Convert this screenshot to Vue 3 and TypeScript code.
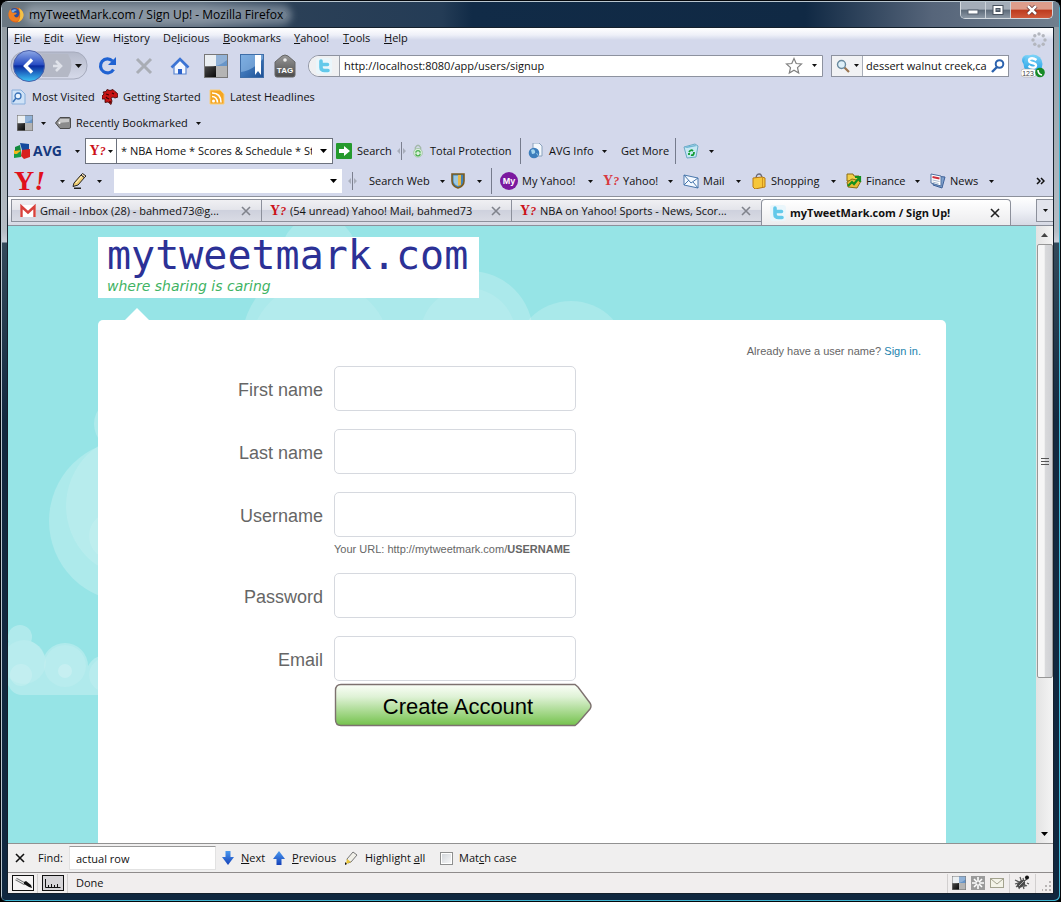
<script setup lang="ts">
import { ref } from 'vue'

interface Field { id: string; label: string; type: string; hint?: boolean }
interface Tab { title: string; icon: string; active?: boolean }
interface YahooLink { label: string; icon: string }

const menus = [
  ['', 'F', 'ile'], ['', 'E', 'dit'], ['', 'V', 'iew'], ['Hi', 's', 'tory'], ['De', 'l', 'icious'],
  ['', 'B', 'ookmarks'], ['', 'Y', 'ahoo!'], ['', 'T', 'ools'], ['', 'H', 'elp'],
]
const tabs: Tab[] = [
  { title: 'Gmail - Inbox (28) - bahmed73@g...', icon: 'gmail' },
  { title: '(54 unread) Yahoo! Mail, bahmed73', icon: 'yq' },
  { title: 'NBA on Yahoo! Sports - News, Scor...', icon: 'yq' },
  { title: 'myTweetMark.com / Sign Up!', icon: 'tw', active: true },
]
const links: YahooLink[] = [
  { label: 'My Yahoo!', icon: 'my' },
  { label: 'Yahoo!', icon: 'yq' },
  { label: 'Mail', icon: 'mail' },
  { label: 'Shopping', icon: 'shop' },
  { label: 'Finance', icon: 'fin' },
  { label: 'News', icon: 'news' },
]
const fields: Field[] = [
  { id: 'first', label: 'First name', type: 'text' },
  { id: 'last', label: 'Last name', type: 'text' },
  { id: 'user', label: 'Username', type: 'text', hint: true },
  { id: 'pass', label: 'Password', type: 'password' },
  { id: 'email', label: 'Email', type: 'email' },
]
const address = ref('http://localhost:8080/app/users/signup')
const query = ref('dessert walnut creek,ca')
const avgQuery = ref('* NBA Home * Scores & Schedule * Stats')
const find = ref('actual row')
</script>

<template>
  <svg class="defs" aria-hidden="true">
    <defs>
      <linearGradient id="gBack" x1="0" y1="0" x2="0" y2="1"><stop offset="0" stop-color="#8fa9e6" /><stop offset=".45" stop-color="#2a4fc4" /><stop offset=".5" stop-color="#0a2aa0" /><stop offset="1" stop-color="#3fc6f6" /></linearGradient>
      <linearGradient id="gCap" x1="0" y1="0" x2="0" y2="1"><stop offset="0" stop-color="#b4b9ca" /><stop offset="1" stop-color="#d6daea" /></linearGradient>
      <linearGradient id="gBlue" x1="0" y1="0" x2="1" y2="1"><stop offset="0" stop-color="#5b97d8" /><stop offset="1" stop-color="#1c4f94" /></linearGradient>
      <linearGradient id="gArrow" x1="0" y1="0" x2="0" y2="1"><stop offset="0" stop-color="#4a9af0" /><stop offset="1" stop-color="#1440b8" /></linearGradient>
      <linearGradient id="gTag" x1="0" y1="0" x2="0" y2="1"><stop offset="0" stop-color="#9a9a9a" /><stop offset="1" stop-color="#4a4a4a" /></linearGradient>
      <linearGradient id="gSky" x1="0" y1="0" x2="0" y2="1"><stop offset="0" stop-color="#7fd4f8" /><stop offset="1" stop-color="#1a9be4" /></linearGradient>
      <linearGradient id="gDark" x1="0" y1="0" x2="1" y2="1"><stop offset="0" stop-color="#4a4a4a" /><stop offset="1" stop-color="#080808" /></linearGradient>
      <linearGradient id="gGo" x1="0" y1="0" x2="0" y2="1"><stop offset="0" stop-color="#fbfff8" /><stop offset=".3" stop-color="#dff2d6" /><stop offset="1" stop-color="#74c24c" /></linearGradient>
    </defs>
    <symbol id="caret" viewBox="0 0 5 3"><path d="M0 0h5L2.500 3z" fill="#111" /></symbol>
    <symbol id="bigcaret" viewBox="0 0 7 4"><path d="M0 0h7L3.500 4z" fill="#000" /></symbol>
    <symbol id="x" viewBox="0 0 10 10"><path d="M1 1l8 8M9 1L1 9" stroke="currentColor" stroke-width="1.600" /></symbol>
    <symbol id="firefox" viewBox="0 0 16 16">
      <circle cx="8" cy="8" r="7.500" fill="#e0661a" /><circle cx="6.500" cy="6" r="5" fill="#2a4f9e" /><path d="M3 4q3-3 6-1-3 1-4 3z" fill="#7db0e4" />
      <path d="M.5 6Q1 3 3 2q0 3 2 4 2-1 4 0-1 2-3 2 1 4 5 2 1 3-3 4.500Q0 14 .5 6z" fill="#ee7f22" />
      <path d="M11 1q5 3 4.500 8-1 5-6 6.300Q14 11 11 1z" fill="#f8c23a" />
    </symbol>
    <symbol id="tw" viewBox="0 0 16 16"><rect width="16" height="16" rx="3" fill="#eaf6fb" /><path d="M5 3v6.500q0 3 3.500 3H12M5 6.500h6.500" fill="none" stroke="#63c9ea" stroke-width="3.600" stroke-linecap="round" /></symbol>
    <symbol id="deli" viewBox="0 0 24 24"><rect width="24" height="24" fill="#777" /><rect x="1" y="1" width="11" height="11" fill="#e4e9ee" /><rect x="12" y="1" width="11" height="11" fill="#6795c8" /><rect x="1" y="12" width="11" height="11" fill="url(#gDark)" /><rect x="12" y="12" width="11" height="11" fill="#b4b4b4" /><path d="M1 13q13 1 22-7v-5H1z" fill="#fff" opacity=".28" /></symbol>
    <symbol id="mark" viewBox="0 0 24 24"><rect x=".5" y=".5" width="23" height="23" fill="url(#gBlue)" stroke="#3f6ea8" /><path d="M1 1h22v4Q12 17 1 18z" fill="#9cc4ec" opacity=".55" /><path d="M15 1h6v20l-3-4-3 4z" fill="#fff" /></symbol>
    <symbol id="reload" viewBox="0 0 20 20"><path d="M15.500 13.500A7 7 0 1 1 14.500 5" fill="none" stroke="#1f62d2" stroke-width="3.200" /><path d="M18 1v8h-8z" fill="#1f62d2" /></symbol>
    <symbol id="stop" viewBox="0 0 20 20"><path d="M3 3l14 14M17 3L3 17" stroke="#a9adb5" stroke-width="3" /></symbol>
    <symbol id="home" viewBox="0 0 20 20"><path d="M4 10v8h12v-8l-6-6z" fill="#f4f8ff" stroke="#5a86d2" stroke-width="1.200" /><path d="M1.500 11.500L10 3l8.500 8.500" fill="none" stroke="#3c74d4" stroke-width="2.600" /><path d="M8 18v-5h4v5z" fill="#2b62cc" /></symbol>
    <symbol id="star" viewBox="0 0 18 18"><path d="M9 1.500l2.200 5 5.300.5-4 3.600 1.200 5.400L9 13.200 4.300 16l1.200-5.400-4-3.600 5.300-.5z" fill="#fff" stroke="#818181" stroke-width="1.200" /></symbol>
    <symbol id="glass" viewBox="0 0 14 14"><path d="M8 8l5 5" stroke="#9a7550" stroke-width="2.200" /><circle cx="5.500" cy="5.500" r="4" fill="#dff0f8" stroke="#6a8ba0" stroke-width="1.400" /></symbol>
    <symbol id="glass2" viewBox="0 0 14 14"><path d="M6 8l-5 5" stroke="#2b62ae" stroke-width="2.400" /><circle cx="8.500" cy="5" r="3.800" fill="#fff" stroke="#2b62ae" stroke-width="2" /></symbol>
    <symbol id="visited" viewBox="0 0 16 16"><path d="M1 1h9l4 4v10H1z" fill="#cfe2f7" stroke="#86aedb" /><circle cx="7" cy="7" r="3" fill="#eaf4ff" stroke="#3a73b8" stroke-width="1.300" /><path d="M5 9l-3 4" stroke="#3a73b8" stroke-width="1.600" /></symbol>
    <symbol id="dino" viewBox="0 0 16 16"><path d="M0 7l2-2-1-2 3-.5L5 .5l3 1 3-1 2 2 2.500 2L16 8l-3 1-2-1-2 1 1 3-1 3.500L6 13l-3 .5V10L0 10z" fill="#c81414" stroke="#3a0404" stroke-width=".8" /><path d="M4 5l3 1M5 9l2 1M10 4l2 1M4 8l1 1M8 12v2" stroke="#400" stroke-width="1.300" /></symbol>
    <symbol id="rss" viewBox="0 0 16 16"><path d="M1 1h10l4 4v10H1z" fill="#f5a623" stroke="#f8cf7e" /><circle cx="4.500" cy="12" r="1.500" fill="#fff" /><path d="M3 7.500q5 0 5.500 6M3 4q9 0 9 9.500" fill="none" stroke="#fff" stroke-width="1.600" /></symbol>
    <symbol id="label" viewBox="0 0 16 12"><path d="M5 .5h9q1.500 0 1.500 1.500v8q0 1.500-1.500 1.500H5L.5 6z" fill="#8b8b8b" stroke="#4b4b4b" /><path d="M5 2h9v3L3 6z" fill="#c8c8c8" /><circle cx="4.500" cy="6" r="1" fill="#fff" /></symbol>
    <symbol id="avg" viewBox="0 0 16 16"><path d="M0 7h7v2l-7 5z" fill="#f5b919" /><path d="M6 0l9 1v6H8z" fill="#14499e" /><path d="M0 11l7-3v6l-7 1z" fill="#169c48" /><path d="M8 7l8-1v8l-6 2-3-3z" fill="#d8201d" /><path d="M1 4l5-2 1 6H1z" fill="#138a3e" /><path d="M1 8l6-1-4 4H1z" fill="#f5b919" /></symbol>
    <symbol id="go" viewBox="0 0 16 16"><rect width="16" height="16" rx="1" fill="#259a2d" /><path d="M3 6h5V3l6 5-6 5v-3H3z" fill="#fff" /></symbol>
    <symbol id="split" viewBox="0 0 9 18"><path d="M4.500 0v18" stroke="#7c8090" /><path d="M3 6v6L0 9zM6 6v6l3-3z" fill="#a8adba" /></symbol>
    <symbol id="lock" viewBox="0 0 14 16"><path d="M4 7V4q3-5 6 0v3" fill="none" stroke="#a3b8a9" stroke-width="1.600" /><circle cx="7" cy="10" r="5" fill="#dcefdc" stroke="#a2c5a5" /><path d="M4.500 10a2.500 2.500 0 0 1 5 0M9.500 11a2.500 2.500 0 0 1-5 0" fill="none" stroke="#4db253" stroke-width="1.400" /></symbol>
    <symbol id="info" viewBox="0 0 16 16"><path d="M5 0h6l3 3v10H5z" fill="#f4f8fc" stroke="#8aa2bd" /><circle cx="6" cy="10" r="5.300" fill="#3d7ebc" /><path d="M3 7q3-2 4 1t-3 3zM8 10q2 0 2 3z" fill="#a6d6ee" /></symbol>
    <symbol id="bin" viewBox="0 0 16 16"><path d="M1 4l11-3 3 2-2 11-9 1z" fill="#c6e8f3" stroke="#6aa9c4" /><path d="M1 4l11-2 2 1-10 2z" fill="#6fb6d6" /><path d="M6 9q2-3 4-1M11 9q0 4-3 3M6 10v2" fill="none" stroke="#119b30" stroke-width="1.800" /></symbol>
    <symbol id="pencil" viewBox="0 0 16 16"><path d="M3 10L10 2l3.500 2.500L7 12l-5 1.500z" fill="#f1cf73" stroke="#222" /><path d="M10 2l1.500-1.500L15 3l-1.500 1.500z" fill="#f6dcb0" stroke="#222" /><path d="M5 10l6-7" stroke="#fff6cf" /><path d="M3 15.300h7" stroke="#222" stroke-width="1.400" /></symbol>
    <symbol id="shield" viewBox="0 0 14 16"><path d="M1 1h12v7q0 5-6 7-6-2-6-7z" fill="#3f83bb" stroke="#7b5c20" stroke-width="1.600" /><path d="M2.500 2.500H7V13q-4-1-4.500-5z" fill="#9cc8e0" /><path d="M7 2h3v10l-3 1z" fill="#e8b94a" /></symbol>
    <symbol id="mail" viewBox="0 0 16 16"><path d="M1 2l14 3v10L1 12z" fill="#f4f9ff" stroke="#4876ab" /><path d="M1 2l7 8 7-5M1 12l5-5M15 15l-5-6" fill="none" stroke="#4876ab" /></symbol>
    <symbol id="shop" viewBox="0 0 16 16"><path d="M5 6q0-5 3-5t3 5" fill="none" stroke="#6a6a76" stroke-width="1.300" /><path d="M2 5l9-1 3 1v9l-10 2-2-2z" fill="#f6c63a" stroke="#b87a14" /><path d="M11.500 5v9" stroke="#d2941f" /></symbol>
    <symbol id="fin" viewBox="0 0 16 16"><path d="M1 1h6l1 2h5v5H1z" fill="#f3cf4a" stroke="#8a6d14" /><path d="M1 9l5-3 9 2-4 7-9-1z" fill="#e9bb35" stroke="#8a6d14" /><path d="M2 13l4-4 2 2 5-6M9 4h5v5" fill="none" stroke="#15901f" stroke-width="2.200" /></symbol>
    <symbol id="news" viewBox="0 0 16 16"><path d="M5 3l10 1-3 11-9-3z" fill="#7ea0cc" stroke="#3d6097" /><path d="M1 1l10 2v10L1 10z" fill="#fff" stroke="#50709f" /><path d="M2.500 4l7 1.500" stroke="#cf2f3d" stroke-width="2" /><path d="M2.500 7l7 1.500M2.500 9l6 1.500" stroke="#aabbd0" /></symbol>
    <symbol id="gmail" viewBox="0 0 16 12"><rect width="16" height="12" rx="1" fill="#fff" /><path d="M1.500 12V1.500L8 7.500l6.500-6V12" fill="none" stroke="#d8413c" stroke-width="2.400" /></symbol>
    <symbol id="down" viewBox="0 0 12 14"><path d="M3.500 0h5v6H12l-6 8-6-8h3.500z" fill="url(#gArrow)" /></symbol>
    <symbol id="up" viewBox="0 0 12 14"><path d="M3.500 14h5V8H12L6 0 0 8h3.500z" fill="url(#gArrow)" /></symbol>
    <symbol id="hi" viewBox="0 0 14 14"><path d="M3 8l6-7 4 3-6 7-3 1z" fill="#f0efe8" stroke="#777" /><path d="M3 8l4 3-5 2z" fill="#e8c435" /><path d="M1 11l2 2-2 1z" fill="#111" /></symbol>
    <symbol id="spin" viewBox="0 0 16 16"><g fill="#b3b6be"><circle cx="8" cy="2" r="1.700" /><circle cx="12.200" cy="3.800" r="1.700" /><circle cx="14" cy="8" r="1.700" /><circle cx="12.200" cy="12.200" r="1.700" /><circle cx="8" cy="14" r="1.700" /><circle cx="3.800" cy="12.200" r="1.700" /><circle cx="2" cy="8" r="1.700" /><circle cx="3.800" cy="3.800" r="1.700" /></g></symbol>
    <symbol id="dropper" viewBox="0 0 22 16"><rect x=".5" y=".5" width="21" height="15" fill="#f6f4f4" stroke="#111" /><path d="M4 4l9 5" stroke="#777" stroke-width="3" /><path d="M4 4l9 5" stroke="#eee" /><path d="M12 7l2-1 5 4 1 3-3-1-5-3z" fill="#111" /></symbol>
    <symbol id="ruler" viewBox="0 0 22 16"><rect x=".5" y=".5" width="21" height="15" fill="#d7d5d8" stroke="#111" /><path d="M3.500 4v8.500h15M6.500 12v-2M9.500 12V9M12.500 12v-2M15.500 12V9" fill="none" stroke="#111" /></symbol>
    <symbol id="flake" viewBox="0 0 14 14"><rect width="14" height="14" fill="#9b9b9b" /><path d="M7 1v12M1 7h12M3 3l8 8M11 3l-8 8" stroke="#fff" stroke-width="1.600" /><circle cx="7" cy="7" r="1.500" fill="#9b9b9b" /></symbol>
    <symbol id="envelope" viewBox="0 0 14 10"><rect x=".5" y=".5" width="13" height="9" fill="#f4f3e8" stroke="#a3a28e" /><path d="M1 1l6 5 6-5" fill="none" stroke="#a3a28e" /></symbol>
    <symbol id="bug" viewBox="0 0 16 16"><path d="M1 5l12 6M2 12L13 4M6 2l4 12M4 8L1 9M9 3l2 9M13 8l2 1M5 14l1-4" stroke="#555" stroke-width="1.200" /><ellipse cx="7" cy="9" rx="4.500" ry="3" transform="rotate(-40 7 9)" fill="#4a4a4a" /><path d="M5 11l5-5" stroke="#aaa" /><circle cx="13" cy="2.500" r="2" fill="#111" /></symbol>
    <symbol id="grip" viewBox="0 0 10 10"><path d="M7 0h2v2H7zM7 4h2v2H7zM7 8h2v2H7zM3 4h2v2H3zM3 8h2v2H3zM0 8h1v2H0z" fill="#b9b5b5" /></symbol>
  </svg>

  <div class="window">
    <header class="titlebar">
      <svg class="i16"><use href="#firefox" /></svg>
      <span class="title">myTweetMark.com / Sign Up! - Mozilla Firefox</span>
      <div class="winbtns">
        <button aria-label="Minimize"><svg width="12" height="10"><rect x="1" y="5" width="10" height="4" fill="#fff" stroke="#596270" /></svg></button>
        <button aria-label="Maximize"><svg width="12" height="10"><path d="M2.500 2h7v6h-7z" fill="none" stroke="#48525f" stroke-width="4" /><path d="M2.500 2h7v6h-7z" fill="none" stroke="#fff" stroke-width="2" /></svg></button>
        <button class="close" aria-label="Close"><svg width="12" height="10"><path d="M2 1l8 8M10 1L2 9" stroke="#5b2a2a" stroke-width="4" /><path d="M2 1l8 8M10 1L2 9" stroke="#fff" stroke-width="2.500" /></svg></button>
      </div>
    </header>

    <div class="client">
      <nav class="menubar">
        <button v-for="m in menus" :key="m.join('')">{{ m[0] }}<u>{{ m[1] }}</u>{{ m[2] }}</button>
        <svg class="i16 spinner"><use href="#spin" /></svg>
      </nav>

      <div class="navbar">
        <button class="backfwd" aria-label="Back and forward">
          <svg width="80" height="34">
            <rect x="1" y="3" width="76" height="27" rx="13" fill="url(#gCap)" stroke="#a6abbd" />
            <path d="M32 5h26q7 11 0 23H32z" fill="#b4b8c5" />
            <circle cx="19" cy="17" r="15.500" fill="url(#gBack)" stroke="#4a5fa8" />
            <path d="M22 10.500L15.500 17l6.500 6.500" fill="none" stroke="#fff" stroke-width="3.400" />
            <path d="M46 12l5 5-5 5M51 17h-8" fill="none" stroke="#dfe2ea" stroke-width="2.600" />
            <path d="M65 15h7l-3.500 4z" fill="#111" />
          </svg>
        </button>
        <button class="tool" aria-label="Reload"><svg class="i20"><use href="#reload" /></svg></button>
        <button class="tool" aria-label="Stop"><svg class="i20"><use href="#stop" /></svg></button>
        <button class="tool" aria-label="Home"><svg class="i20"><use href="#home" /></svg></button>
        <button class="tool" aria-label="Delicious"><svg class="i24"><use href="#deli" /></svg></button>
        <button class="tool" aria-label="Bookmarks"><svg class="i24"><use href="#mark" /></svg></button>
        <button class="tool narrow">
          <svg width="22" height="24"><path d="M1 8l7-6q3-2 6 0l7 6v13q0 2-2 2H3q-2 0-2-2z" fill="url(#gTag)" stroke="#666" /><circle cx="11" cy="6" r="1.800" fill="#eee" /><text x="11" y="19" text-anchor="middle" fill="#fff" font-family="Liberation Sans, sans-serif" font-size="8" font-weight="bold">TAG</text></svg>
        </button>
        <div class="urlbar">
          <span class="site"><svg class="i16"><use href="#tw" /></svg></span>
          <input v-model="address" aria-label="Address" />
          <svg class="i18"><use href="#star" /></svg>
          <svg class="caret"><use href="#caret" /></svg>
        </div>
        <div class="searchbar">
          <span class="engine"><svg class="i14"><use href="#glass" /></svg><svg class="caret"><use href="#caret" /></svg></span>
          <input v-model="query" aria-label="Search the web" />
          <svg class="i14"><use href="#glass2" /></svg>
        </div>
        <button class="tool skype" aria-label="Skype">
          <svg width="24" height="24"><circle cx="6" cy="6" r="5" fill="url(#gSky)" /><circle cx="12" cy="10" r="9.500" fill="url(#gSky)" /><path d="M15.500 6q-4-3-7-1-2 3 3 4t3 4q-3 2-7-1" fill="none" stroke="#fff" stroke-width="2.400" /><rect x="0" y="15" width="15" height="8" rx="3" fill="#fff" stroke="#aaa" stroke-width=".6" /><text x="7" y="22" text-anchor="middle" fill="#444" font-family="Liberation Sans, sans-serif" font-size="7">123</text><circle cx="19" cy="18.500" r="4.800" fill="#178a26" /><path d="M17 16q0 4 4 5" stroke="#fff" stroke-width="1.600" fill="none" /></svg>
        </button>
      </div>

      <div class="bar bookmarks">
        <button><svg class="i16"><use href="#visited" /></svg>Most Visited</button>
        <button><svg class="i16"><use href="#dino" /></svg>Getting Started</button>
        <button><svg class="i16"><use href="#rss" /></svg>Latest Headlines</button>
      </div>

      <div class="bar recent">
        <button aria-label="Delicious menu"><svg class="i16"><use href="#deli" /></svg><svg class="caret"><use href="#caret" /></svg></button>
        <button><svg class="i16"><use href="#label" /></svg>Recently Bookmarked<svg class="caret"><use href="#caret" /></svg></button>
      </div>

      <div class="bar avg">
        <button class="brand"><svg class="i16"><use href="#avg" /></svg><b>AVG</b><svg class="caret"><use href="#caret" /></svg></button>
        <div class="combo">
          <span class="engine"><span class="yq">Y<i>?</i></span><svg class="caret"><use href="#caret" /></svg></span>
          <input v-model="avgQuery" aria-label="AVG search" />
          <svg class="bigcaret"><use href="#bigcaret" /></svg>
        </div>
        <button><svg class="i16"><use href="#go" /></svg>Search</button>
        <svg class="split"><use href="#split" /></svg>
        <button><svg class="i14"><use href="#lock" /></svg>Total Protection</button>
        <i class="sep" />
        <button class="drop"><svg class="i16"><use href="#info" /></svg>AVG Info<svg class="caret"><use href="#caret" /></svg></button>
        <button>Get More</button>
        <i class="sep" />
        <button class="drop" aria-label="Clean up"><svg class="i16"><use href="#bin" /></svg><svg class="caret"><use href="#caret" /></svg></button>
      </div>

      <div class="bar yahoo">
        <button class="drop"><span class="ybig">Y<i>!</i></span><svg class="caret"><use href="#caret" /></svg></button>
        <button class="drop" aria-label="Edit"><svg class="i16"><use href="#pencil" /></svg><svg class="caret"><use href="#caret" /></svg></button>
        <div class="ysearch"><input aria-label="Yahoo search" /><svg class="bigcaret"><use href="#bigcaret" /></svg></div>
        <svg class="split"><use href="#split" /></svg>
        <button class="drop web">Search Web<svg class="caret"><use href="#caret" /></svg></button>
        <button class="drop" aria-label="Protection"><svg class="shield"><use href="#shield" /></svg><svg class="caret"><use href="#caret" /></svg></button>
        <i class="sep" />
        <button v-for="l in links" :key="l.label" class="drop link">
          <span v-if="l.icon === 'my'" class="my">My</span>
          <span v-else-if="l.icon === 'yq'" class="yq light">Y<i>?</i></span>
          <svg v-else class="i16"><use :href="'#' + l.icon" /></svg>{{ l.label }}<svg class="caret"><use href="#caret" /></svg>
        </button>
        <button class="more" aria-label="More"><svg width="9" height="8"><path d="M1 1l3 3-3 3M5 1l3 3-3 3" fill="none" stroke="#111" stroke-width="1.500" /></svg></button>
      </div>

      <div class="tabstrip">
        <div v-for="t in tabs" :key="t.title" class="tab" :class="{ active: t.active }">
          <span v-if="t.icon === 'yq'" class="yq">Y<i>?</i></span>
          <svg v-else class="i16"><use :href="'#' + t.icon" /></svg>
          <span class="caption">{{ t.title }}</span>
          <button aria-label="Close tab"><svg class="i10"><use href="#x" /></svg></button>
        </div>
        <button class="alltabs" aria-label="List all tabs"><svg class="caret"><use href="#caret" /></svg></button>
      </div>

      <div class="view">
        <main class="page">
          <svg class="sky" aria-hidden="true">
            <g fill="#fff">
              <circle cx="311" cy="28" r="38" opacity=".2" />
              <g opacity=".2"><circle cx="318" cy="120" r="85" /><circle cx="462" cy="108" r="63" /><rect x="318" y="60" width="144" height="50" /></g>
              <circle cx="312" cy="125" r="70" opacity=".1" />
              <circle cx="460" cy="110" r="48" opacity=".1" />
              <circle cx="563" cy="132" r="57" opacity=".18" />
              <circle cx="112" cy="198" r="26" opacity=".22" />
              <circle cx="122" cy="295" r="81" opacity=".22" />
              <circle cx="130" cy="280" r="72" opacity=".12" />
              <circle cx="105" cy="310" r="24" opacity=".1" />
              <g opacity=".25"><circle cx="12" cy="411" r="12" /><circle cx="13" cy="438" r="25" /><circle cx="57" cy="440" r="23" /><circle cx="98" cy="449" r="20" /><rect x="0" y="440" width="124" height="29" rx="14" /></g>
              <circle cx="16" cy="436" r="22" opacity=".1" />
              <circle cx="57" cy="440" r="21" opacity=".1" />
              <circle cx="13" cy="449" r="11" opacity=".15" />
              <circle cx="57" cy="445" r="7" opacity=".2" />
              <circle cx="98" cy="449" r="17" opacity=".1" />
            </g>
          </svg>
          <div class="content">
            <a href="#" class="logo"><span class="name">mytweetmark.com</span><span class="tagline">where sharing is caring</span></a>
            <svg class="notch"><path d="M0 12L12 0l12 12z" fill="#fff" /></svg>
            <section class="card">
              <p class="signin">Already have a user name? <a href="#">Sign in.</a></p>
              <form @submit.prevent>
                <div v-for="f in fields" :key="f.id" class="field">
                  <label :for="f.id">{{ f.label }}</label>
                  <input :id="f.id" :type="f.type" />
                  <p v-if="f.hint" class="hint">Your URL: http://mytweetmark.com/<b>USERNAME</b></p>
                </div>
                <button class="create" type="submit">
                  <svg width="258" height="44" aria-hidden="true"><path d="M7 1.500h234l3 2.500 12 16q2 3 0 6l-12 14-3 2.500H7q-5.500 0-5.500-6V7.500q0-6 5.500-6z" fill="url(#gGo)" stroke="#7d716f" stroke-width="1.400" /></svg>
                  <span>Create Account</span>
                </button>
              </form>
            </section>
          </div>
        </main>
        <div class="scroll">
          <button aria-label="Scroll up"><svg width="7" height="4"><path d="M0 4h7L3.500 0z" fill="#444" /></svg></button>
          <div class="thumb"><svg width="8" height="9"><path d="M0 1.500h8M0 4.500h8M0 7.500h8" stroke="#555" /></svg></div>
          <button aria-label="Scroll down"><svg class="bigcaret"><use href="#bigcaret" /></svg></button>
        </div>
      </div>

      <div class="findbar">
        <button aria-label="Close find bar"><svg class="i10"><use href="#x" /></svg></button>
        <label for="find">Find:</label>
        <input id="find" v-model="find" type="text" />
        <button><svg class="arrow"><use href="#down" /></svg><span><u>N</u>ext</span></button>
        <button><svg class="arrow"><use href="#up" /></svg><span><u>P</u>revious</span></button>
        <button><svg class="i14"><use href="#hi" /></svg><span>Highlight <u>a</u>ll</span></button>
        <label class="match"><input type="checkbox" /><span>Mat<u>c</u>h case</span></label>
      </div>

      <footer class="status">
        <span class="cell"><svg class="box"><use href="#dropper" /></svg></span>
        <span class="cell"><svg class="box"><use href="#ruler" /></svg></span>
        <span class="done">Done</span>
        <span class="tray"><svg class="i14"><use href="#deli" /></svg><svg class="i14"><use href="#flake" /></svg><svg class="i14"><use href="#envelope" /></svg></span>
        <span class="tray"><svg class="i16"><use href="#bug" /></svg></span>
        <span class="tray last"><svg class="i10"><use href="#grip" /></svg></span>
      </footer>
    </div>
  </div>
</template>

<style>
body { background: #000; }
</style>

<style scoped>
* { box-sizing: border-box; }
.defs { position: absolute; width: 0; height: 0; }
svg { display: block; flex: none; }
button { font: inherit; color: inherit; background: none; border: 0; padding: 0; margin: 0; }
input { font: inherit; color: inherit; border: 0; outline: 0; padding: 0; margin: 0; min-width: 0; background: none; }
.i10 { width: 10px; height: 10px; }
.i14 { width: 14px; height: 14px; }
.i16 { width: 16px; height: 16px; }
.i18 { width: 18px; height: 18px; }
.i20 { width: 20px; height: 20px; }
.i24 { width: 24px; height: 24px; }
.shield { width: 14px; height: 18px; }
.caret { width: 5px; height: 3px; }
.bigcaret { width: 7px; height: 4px; }
.split { width: 9px; height: 18px; }
.arrow { width: 12px; height: 14px; }
.box { width: 22px; height: 16px; }
.yq { flex: none; width: 16px; font: bold 14px/16px "Liberation Serif", serif; color: #cc1119; white-space: nowrap; text-align: left; }
.yq i { font-size: 12px; }
.light { color: #d8383e; }
.ybig { width: 34px; font: bold 28px/26px "Liberation Serif", serif; color: #e0101c; text-align: left; white-space: nowrap; }
.my { flex: none; width: 18px; height: 18px; border-radius: 50%; background: #7b189f; color: #fff; font: bold 9px/18px "Liberation Sans", sans-serif; text-align: center; }

.window {
  height: 100vh; display: flex; flex-direction: column; padding: 1px 7px 7px;
  font: 11px/16px "Open Sans", "Noto Sans", sans-serif; color: #111;
  border: 1px solid #05080c; border-radius: 8px 8px 6px 6px; overflow: hidden;
  background: linear-gradient(#8f989f 0, #b5bcc4 230px, #c9ced8 241px, #33495a 242px, #12283f 420px, #10273f 100%);
  box-shadow: inset 1px 1px 0 #b9c6cf, inset -1px -1px 0 #3fb4d0;
}
.titlebar {
  height: 25px; display: flex; align-items: center; gap: 5px; flex: none; margin: 0 -6px; padding-left: 6px;
  background: linear-gradient(90deg, #6b7882 0, #59697a 200px, #2b4057 290px, #243c56 440px, #112b47 470px, #102944 76%, #56657a 88%, #707f8e 100%);
}
.title { padding: 0 4px 0 0; font-size: 12px; line-height: 10px; white-space: nowrap; color: #000; border-radius: 8px; background: rgba(190, 200, 208, .45); box-shadow: 0 0 7px 5px rgba(190, 200, 208, .45); }
.winbtns { margin-left: auto; margin-right: 6px; align-self: flex-start; display: flex; height: 17px; border: 1px solid #d3d9df; border-top: 0; border-radius: 0 0 5px 5px; overflow: hidden; }
.winbtns button { width: 25px; display: grid; place-items: center; border-right: 1px solid #ccd2d9; background: linear-gradient(#a4adb8 45%, #5d6a79 50%, #8d99a6); }
.winbtns .close { width: 41px; border: 0; background: linear-gradient(#dd9d8b 45%, #bd3a1d 50%, #cf5a3c); }

.client { flex: 1; min-height: 0; display: flex; flex-direction: column; border: 1px solid #14202c; margin: 0 -1px; background: #d3d8eb; }
.menubar { height: 20px; flex: none; display: grid; grid-template-columns: 30px 32px 37px 50px 60px 71px 49px 41px auto 1fr; padding: 0 6px; background: linear-gradient(#fff 0, #eef0f8 35%, #d3d8eb 60%); }
.menubar button { text-align: left; white-space: nowrap; }
.spinner { justify-self: end; align-self: end; }

.navbar { height: 35px; flex: none; display: flex; align-items: center; padding-left: 2px; }
.backfwd { width: 80px; }
.tool { width: 36px; display: grid; place-items: center; }
.narrow { width: 30px; }
.skype { width: 44px; padding-left: 4px; }
.urlbar { flex: 1; height: 22px; margin: 0 8px; display: flex; align-items: center; border: 1px solid #8d929f; border-radius: 11px 0 0 11px; background: #fff; overflow: hidden; padding-right: 5px; gap: 9px; }
.urlbar input { flex: 1; margin-left: -5px; }
.site { width: 31px; height: 20px; display: grid; place-items: center; border-right: 1px solid #9ba0a9; background: #eff0f2; }
.searchbar { width: 178px; height: 22px; display: flex; align-items: center; border: 1px solid #8d929f; background: #fff; padding-right: 3px; }
.searchbar input { flex: 1; padding-left: 3px; }
.engine { width: 31px; align-self: stretch; display: flex; align-items: center; justify-content: center; gap: 4px; border-right: 1px solid #a8adb8; }
.searchbar .engine { background: #f1f2f4; }

.bar { flex: none; display: grid; align-items: center; white-space: nowrap; }
.bar > button { display: flex; align-items: center; gap: 5px; min-width: 0; }
.bookmarks { height: 27px; grid-template-columns: 91px 107px auto; justify-content: start; padding-left: 3px; }
.recent { height: 26px; grid-template-columns: 38px auto; justify-content: start; padding-left: 9px; }
.recent .caret { margin-left: 3px; }
.drop .caret, .brand .caret { margin-left: auto; }
.avg { height: 30px; grid-template-columns: 66px 5px 248px 3px 61px 9px 5px 109px 2px 6px 79px 14px 54px 2px 6px 31px; justify-content: start; padding-left: 6px; }
.avg > :nth-child(1) { grid-column: 1; }
.avg > :nth-child(2) { grid-column: 3; }
.avg > :nth-child(3) { grid-column: 5; }
.avg > :nth-child(4) { grid-column: 6; }
.avg > :nth-child(5) { grid-column: 8; }
.avg > :nth-child(6) { grid-column: 9; }
.avg > :nth-child(7) { grid-column: 11; }
.avg > :nth-child(8) { grid-column: 13; }
.avg > :nth-child(9) { grid-column: 14; }
.avg > :nth-child(10) { grid-column: 16; }
.avg .brand { gap: 3px; }
.avg b { font: bold 14px/16px "Open Sans", sans-serif; color: #15387e; }
.combo { height: 26px; display: flex; align-items: center; background: #fff; border: 1px solid #6c727e; padding-right: 5px; }
.combo .engine { gap: 2px; border-color: #6c727e; }
.combo input { flex: 1; padding-left: 4px; margin-right: 8px; }
.sep { width: 1px; height: 26px; background: #757b8c; }
.yahoo { height: 30px; column-gap: 6px; padding: 0 8px 0 6px; grid-template-columns: 51px 31px 234px 9px 82px 31px 6px 97px 74px 62px 89px 78px 68px 1fr; }
.yahoo .sep { margin-left: 3px; }
.web { padding-left: 6px; }
.bar > .link { gap: 4px; padding-right: 4px; }
.ysearch { height: 24px; display: flex; align-items: center; margin-left: 6px; background: #fff; padding-right: 5px; }
.ysearch input { flex: 1; }
.more { justify-self: end; }

.tabstrip { height: 30px; flex: none; display: flex; align-items: flex-end; padding: 0 0 3px 3px; border-top: 1px solid #8c909b; border-bottom: 1px solid #8c909b; background: linear-gradient(#fff 0, #eef0f6 50%, #d6d9e4 100%); }
.tab { flex: 0 1 250px; min-width: 0; height: 23px; display: flex; align-items: center; gap: 4px; padding: 0 10px 0 8px; white-space: nowrap; border: 1px solid #8c909b; border-right: 0; background: linear-gradient(#f0f0f3 0, #e4e5eb 45%, #ced1dd 50%, #d9dbe4 100%); }
.caption { flex: 1; overflow: hidden; }
.tab button { color: #80838c; }
.tab.active { height: 26px; margin-bottom: -3px; border-right: 1px solid #8c909b; border-bottom: 0; border-radius: 4px 4px 0 0; background: linear-gradient(#fff, #ececee); font-weight: bold; }
.tab.active button { color: #222; }
.alltabs { margin-left: auto; width: 17px; height: 23px; display: grid; place-items: center; border: 1px solid #8c909b; border-right: 0; background: #e2e4ec; }

.view { flex: 1; min-height: 0; display: flex; }
.page { flex: 1; min-width: 0; position: relative; overflow: hidden; background: #96e4e6; display: flex; justify-content: center; }
.sky { position: absolute; left: 0; top: 0; width: 100%; height: 100%; }
.content { position: relative; width: 848px; max-width: 100%; display: flex; flex-direction: column; align-items: flex-start; padding-top: 11px; font-family: "Liberation Sans", Arial, sans-serif; }
.logo { width: 381px; height: 61px; background: #fff; padding-left: 9px; text-decoration: none; display: flex; flex-direction: column; white-space: nowrap; }
.name { font: 40px/36px "DejaVu Sans Mono", monospace; color: #2c3196; }
.tagline { font: italic 14px/26px "DejaVu Sans", sans-serif; color: #3fb364; }
.notch { width: 24px; height: 12px; margin: 10px 0 0 27px; }
.card { flex: 1; width: 100%; background: #fff; border-radius: 5px 5px 0 0; padding: 23px 25px 0; }
.signin { margin: 0; text-align: right; font-size: 11px; line-height: 16px; color: #666; }
.signin a { color: #2283ae; text-decoration: none; }
form { padding-top: 7px; }
.field { display: grid; grid-template-columns: 200px 242px; column-gap: 11px; padding-bottom: 18px; }
.field label { text-align: right; font-size: 18px; line-height: 48px; height: 45px; color: #666; }
.field input { height: 45px; border: 1px solid #d6d9df; border-radius: 5px; padding: 0 10px; font-size: 18px; background: #fff; }
.hint { grid-column: 2; margin: 4px 0 -2px; font-size: 11px; line-height: 16px; color: #666; white-space: nowrap; }
.create { display: grid; margin: -16px 0 0 211px; color: #000; font-size: 22px; line-height: 47px; }
.create > * { grid-area: 1 / 1; }
.create span { width: 248px; z-index: 1; }
.scroll { width: 17px; flex: none; display: grid; grid-template-rows: 18px 435fr 147fr 18px; background: linear-gradient(90deg, #e3e3e3, #f4f4f4); }
.scroll button { display: grid; place-items: center; }
.scroll button:last-child { grid-row: 4; }
.thumb { margin-left: 1px; display: grid; place-items: center; border: 1px solid #979797; border-radius: 2px; background: linear-gradient(90deg, #f6f6f6 45%, #d9dadc 50%, #cfd0d4); }

.findbar { height: 29px; flex: none; display: grid; align-items: center; grid-template-columns: 23px 31px 153px 51px 71px 96px auto; justify-content: start; padding-left: 7px; border-top: 1px solid #919191; background: #f0efef; white-space: nowrap; }
.findbar button { display: flex; align-items: center; gap: 7px; }
.findbar > input { width: 147px; height: 24px; background: #fff; border: 1px solid #e2e2e2; border-top-color: #999; padding-left: 6px; }
.match { display: flex; align-items: center; gap: 6px; }
.match input { appearance: none; width: 13px; height: 13px; border: 1px solid #8e8f8f; background: linear-gradient(135deg, #cfd3d8, #fafafa); box-shadow: inset 0 0 0 1px #fff; }
.status { height: 21px; flex: none; display: flex; align-items: center; border-top: 1px solid #8f8b8b; background: #f1eeee; }
.cell { width: 30px; height: 19px; display: grid; place-items: center; border-right: 1px solid #d2cfcf; }
.done { flex: 1; padding-left: 8px; }
.tray { height: 19px; display: flex; align-items: center; gap: 5px; padding: 0 5px 0 4px; border-left: 1px solid #d2cfcf; }
.last { padding: 6px 1px 0 6px; }
</style>
